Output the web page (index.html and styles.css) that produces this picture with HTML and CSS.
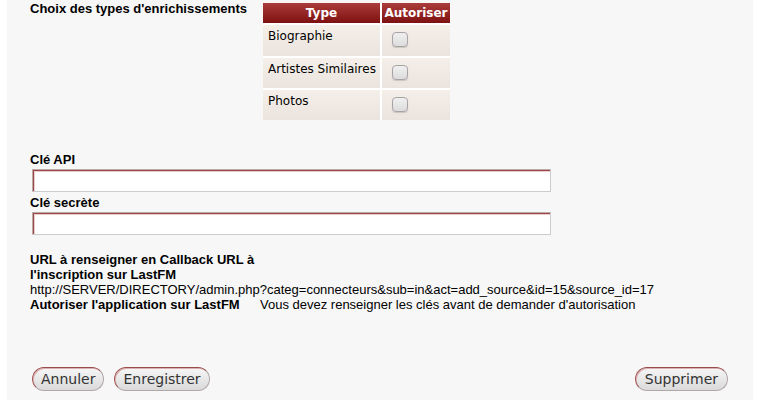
FILE: index.html
```html
<!DOCTYPE html>
<html lang="fr">
<head>
    <meta charset="UTF-8">
    <meta name="viewport" content="width=device-width, initial-scale=1.0">
    <title>Connecteur LastFM</title>
    <link rel="stylesheet" href="styles.css">
</head>
<body>
    <div class="panel">
        <div class="enrich">
            <div class="enrich-label">Choix des types d'enrichissements</div>
            <div class="types">
                <div class="th">Type</div>
                <div class="th">Autoriser</div>
                <div class="td">Biographie</div>
                <div class="td td-check"><span class="check"></span></div>
                <div class="td">Artistes Similaires</div>
                <div class="td td-check"><span class="check"></span></div>
                <div class="td">Photos</div>
                <div class="td td-check"><span class="check"></span></div>
            </div>
        </div>

        <label class="field-label first" for="api_key">Clé API</label>
        <input type="text" id="api_key" class="field">
        <label class="field-label" for="secret_key">Clé secrète</label>
        <input type="text" id="secret_key" class="field">

        <div class="info">
            <div class="info-title">URL à renseigner en Callback URL à l'inscription sur LastFM</div>
            <div class="info-url">http://SERVER/DIRECTORY/admin.php?categ=connecteurs&amp;sub=in&amp;act=add_source&amp;id=15&amp;source_id=17</div>
            <div class="info-row">
                <div class="info-label">Autoriser l'application sur LastFM</div>
                <div>Vous devez renseigner les clés avant de demander d'autorisation</div>
            </div>
        </div>

        <div class="actions">
            <div class="actions-left">
                <button type="button" class="bouton">Annuler</button>
                <button type="button" class="bouton">Enregistrer</button>
            </div>
            <button type="button" class="bouton bouton-large">Supprimer</button>
        </div>
    </div>
</body>
</html>
```

FILE: styles.css
```css
/* Fond de page */
body {
    margin: 0;
    background: #ffffff;
    font-family: "Liberation Sans", Arial, sans-serif;
    font-size: 13px;
    color: #000000;
}

/* Bloc principal */
.panel {
    width: 723px;
    height: 399px;
    margin-left: 7px;
    padding: 1px 0 0 23px;
    background-color: #f7f7f7;
}

/* Choix des enrichissements */
.enrich {
    display: flex;
    line-height: 15px;
}

.enrich-label {
    width: 233px;
    font-weight: bold;
}

.types {
    display: grid;
    grid-template-columns: 117px 68px;
    grid-template-rows: 20px 31px 30px 30px;
    gap: 2px;
    margin-top: 2px;
    background-color: #ffffff;
    font-family: "DejaVu Sans", Verdana, sans-serif;
    font-size: 12px;
    line-height: 14px;
}

.th {
    background: linear-gradient(#ac3c3c, #7d1010);
    color: #ffffff;
    font-weight: bold;
    text-align: center;
    line-height: 20px;
}

.td {
    background: linear-gradient(#f5efe9, #ebe4de);
    padding: 4px 0 0 5px;
}

.td-check {
    display: flex;
    align-items: center;
    padding: 0 0 0 10px;
}

.check {
    width: 14px;
    height: 13px;
    margin-top: -2px;
    border: 1px solid #a8a4a4;
    border-radius: 4px;
    background: linear-gradient(#f0f0f0, #dcdcdc);
    box-shadow: 0 1px 1px rgba(0, 0, 0, 0.15);
}

/* Champs */
.field-label {
    display: block;
    font-weight: bold;
    line-height: 15px;
    margin-top: 3px;
}

.field-label.first {
    margin-top: 32px;
}

.field {
    display: block;
    width: 519px;
    height: 23px;
    margin: 2px 0 0 2px;
    box-sizing: border-box;
    background: #ffffff;
    border: 1px solid;
    border-color: #b9a9a9 #cccccc #cccccc #b9a9a9;
    box-shadow: inset 1px 1px 0 #9c4848, inset 2px 2px 0 #ebcaca;
    font-size: 12px;
}

/* Informations LastFM */
.info {
    margin-top: 17px;
    line-height: 15px;
}

.info-title {
    width: 236px;
    font-weight: bold;
}

.info-label {
    width: 230px;
    font-weight: bold;
}

.info-row {
    display: flex;
}

/* Boutons */
.actions {
    display: flex;
    justify-content: space-between;
    align-items: center;
    margin: 55px 25px 0 2px;
}

.actions-left {
    display: flex;
    gap: 10px;
}

.bouton {
    height: 24px;
    padding: 0 8px;
    border: 1px solid #b0a6a6;
    border-top-color: #9a4a4a;
    border-left-color: #a65a5a;
    border-radius: 12px;
    background: linear-gradient(#f6f6f6, #dadada);
    box-shadow: inset 1px 1px 0 #d9b3b3;
    font-family: "DejaVu Sans", Verdana, sans-serif;
    font-size: 14px;
    color: #333333;
    cursor: pointer;
}

.bouton-large {
    padding: 0 9px;
}
```
